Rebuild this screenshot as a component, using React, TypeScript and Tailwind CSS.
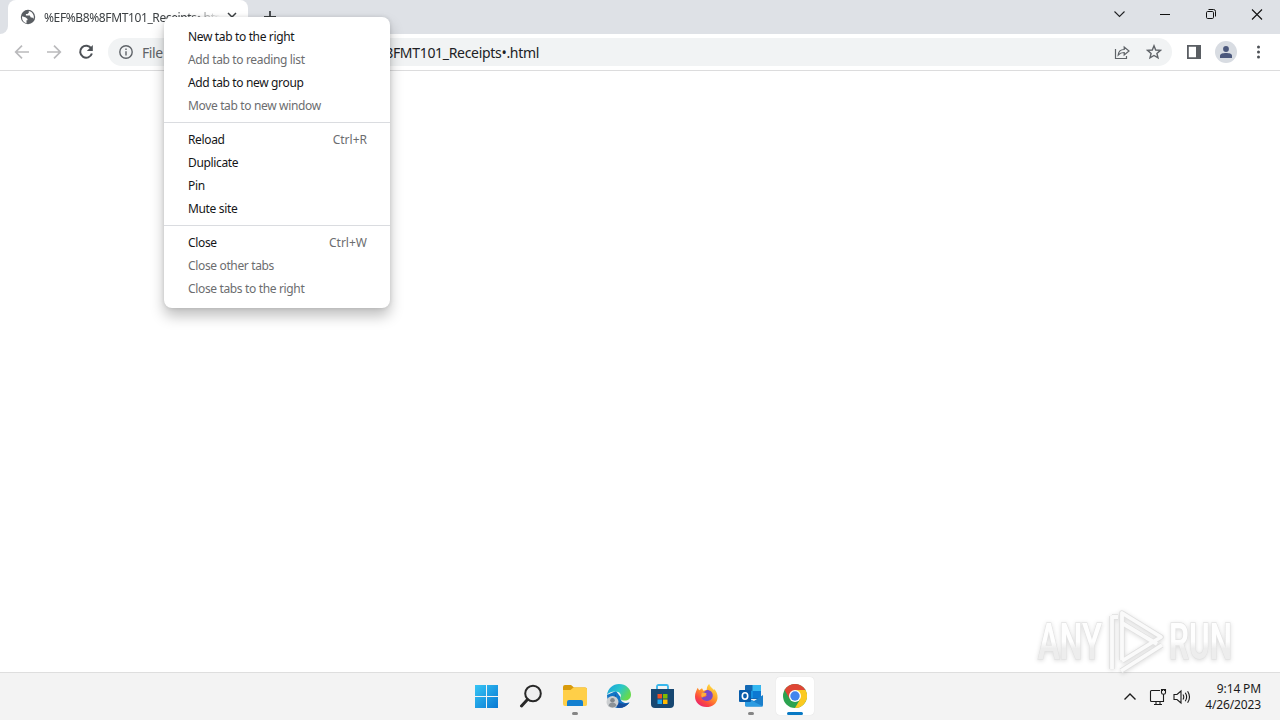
import React from "react";

type MenuItem = {
  label: string;
  shortcut?: string;
  disabled?: boolean;
};

const menuGroups: MenuItem[][] = [
  [
    { label: "New tab to the right" },
    { label: "Add tab to reading list", disabled: true },
    { label: "Add tab to new group" },
    { label: "Move tab to new window", disabled: true },
  ],
  [
    { label: "Reload", shortcut: "Ctrl+R" },
    { label: "Duplicate" },
    { label: "Pin" },
    { label: "Mute site" },
  ],
  [
    { label: "Close", shortcut: "Ctrl+W" },
    { label: "Close other tabs", disabled: true },
    { label: "Close tabs to the right", disabled: true },
  ],
];

const GlobeIcon = () => (
  <svg className="w-4 h-4 shrink-0" viewBox="0 0 16 16">
    <circle cx="8" cy="8" r="7.2" fill="#5a5e63" />
    <path d="M2.2 7.2 5.8 8.500 7.500 10v1.200H6.500v3C4 13.700 2 11.400 2 8.300ZM8.800 2.100v1.700L7.400 5H5.900v1.600h3.900l1 1.900h1.500l1.200 1.300c.4-.9.500-2.700-.1-3.900C12.600 3.800 11 2.500 8.800 2.100Z" fill="#fff" />
  </svg>
);

const TabStrip = () => (
  <div className="flex h-[34px] bg-[#dee1e6]">
    <div className="flex w-2 items-end bg-white">
      <div className="h-full w-2 rounded-br-lg bg-[#dee1e6]" />
    </div>
    <div className="flex h-[34px] w-[240px] items-center rounded-t-lg bg-white pl-3">
      <GlobeIcon />
      <span className="ml-2 w-[176px] overflow-hidden whitespace-nowrap pt-px text-[12px] leading-4 tracking-[-0.38px] text-[#3c4043] [mask-image:linear-gradient(to_right,black_82%,transparent)]">
        %EF%B8%8FMT101_Receipts•.html
      </span>
      <svg className="ml-1 h-4 w-4 shrink-0" viewBox="0 0 16 16" stroke="#3c4043" strokeWidth="1.5">
        <path d="m4 4 8 8M12 4l-8 8" />
      </svg>
    </div>
    <div className="flex w-2 bg-white">
      <div className="h-full w-2 rounded-bl-lg bg-[#dee1e6]" />
    </div>
    <svg className="ml-1.5 mt-[9px] h-4 w-4" viewBox="0 0 16 16" stroke="#3c4043" strokeWidth="1.8">
      <path d="M8 2v12M2 8h12" />
    </svg>
    <div className="ml-auto flex h-7 items-center">
      <svg className="mr-[5px] h-7 w-9" viewBox="0 0 36 28" fill="none" stroke="#202124" strokeWidth="1.1">
        <path d="m13.500 11.500 5 5 5-5" />
      </svg>
      <svg className="h-7 w-[46px]" viewBox="0 0 46 28" stroke="#111">
        <path d="M18 14.500h10" />
      </svg>
      <svg className="h-7 w-[46px]" viewBox="0 0 46 28" fill="none" stroke="#111">
        <rect x="18.500" y="11.500" width="7" height="7" rx="1.200" />
        <path d="M20.500 9.500h5q2 0 2 2v5" />
      </svg>
      <svg className="h-7 w-[46px]" viewBox="0 0 46 28" stroke="#111" strokeWidth="1.1">
        <path d="m18 9.500 10 10M28 9.500l-10 10" />
      </svg>
    </div>
  </div>
);

const Toolbar = () => (
  <div className="flex h-[37px] items-center border-b border-[#dcdcdd] bg-white">
    <div className="flex w-[108px] shrink-0 items-center gap-4 pl-3.5 text-[#bababc]">
      <svg className="h-4 w-4" viewBox="0 0 16 16" fill="none" stroke="currentColor" strokeWidth="1.700">
        <path d="M15 8H2M8 1.700 1.700 8 8 14.300" />
      </svg>
      <svg className="h-4 w-4" viewBox="0 0 16 16" fill="none" stroke="currentColor" strokeWidth="1.700">
        <path d="M1 8h13M8 1.700 14.300 8 8 14.300" />
      </svg>
      <svg className="h-4 w-4" viewBox="0 0 16 16" fill="none" stroke="#4d5156" strokeWidth="2">
        <path d="M13.300 4.600A6 6 0 1 0 13.900 9.500" />
        <path d="M14.800 1v6H8.800Z" fill="#4d5156" stroke="none" />
      </svg>
    </div>
    <div className="flex h-7 w-[1064px] items-center rounded-full bg-[#f1f3f4] pl-[11px] pr-2.5">
      <svg className="h-[14px] w-[14px]" viewBox="0 0 14 14" fill="none" stroke="#5f6368" strokeWidth="1.400">
        <circle cx="7" cy="7" r="6.200" />
        <path d="M7 6.200v4.200M7 3.400v1.500" />
      </svg>
      <span className="ml-[9px] text-[14px] tracking-[-0.45px] text-[#5f6368]">File</span>
      <span className="ml-auto whitespace-nowrap text-right text-[14px] tracking-[-0.31px] text-[#202124]">
        8FMT101_Receipts•.html
      </span>
      <div className="ml-[575px] flex items-center gap-4">
        <svg className="h-4 w-4" viewBox="0 0 16 16" fill="none" stroke="#5f6368" strokeWidth="1.200">
          <path d="M1.500 5v9.500h11V12" />
          <path d="M4.200 11c.3-3.600 2.300-5.400 6-5.500V3l4.800 4-4.800 4V8.500c-2.600 0-4.500.7-6 2.500Z" />
        </svg>
        <svg className="h-4 w-4" viewBox="0 0 16 16" fill="none" stroke="#5f6368" strokeWidth="1.400">
          <path d="m8 1.800 1.700 4.200 4.700.4-3.500 3 1.100 4.500L8 11.500l-4 2.400 1.100-4.500-3.500-3L6.300 6Z" />
        </svg>
      </div>
    </div>
    <svg className="ml-[15px] h-[14px] w-[14px]" viewBox="0 0 14 14" fill="none" stroke="#5a5e63" strokeWidth="1.800">
      <path d="M.9.900h12.200v12.200H.900Z" />
      <path d="M9 0h5v14H9Z" fill="#5a5e63" stroke="none" />
    </svg>
    <div className="ml-3.5 flex h-[22px] w-[22px] items-center justify-center rounded-full bg-[#d8dce2]">
      <svg className="h-3 w-3" viewBox="0 0 12 12" fill="#4b587c">
        <circle cx="6" cy="3" r="2.900" />
        <path d="M0 12V9.800C0 7.800 3 7.100 6 7.100s6 .7 6 2.700V12Z" />
      </svg>
    </div>
    <svg className="ml-[14px] h-4 w-4" viewBox="0 0 16 16" fill="#4d5156">
      <circle cx="7.500" cy="3" r="1.500" />
      <circle cx="7.500" cy="8" r="1.500" />
      <circle cx="7.500" cy="13" r="1.500" />
    </svg>
  </div>
);

const TabMenu = () => (
  <div className="absolute left-[164px] top-[17px] w-[226px] rounded-lg bg-white py-2 text-[12px] tracking-[-0.35px] shadow-[0_8px_14px_rgba(0,0,0,0.25),0_0_4px_rgba(0,0,0,0.12)]">
    {menuGroups.map((group, index) => (
      <div key={index} className={index > 0 ? "mt-[5px] border-t border-[#dadce0] pt-[5px]" : ""}>
        {group.map((item) => (
          <div key={item.label} className="flex h-[23px] items-center justify-between pl-6 pr-[23px] pt-px">
            <span className={item.disabled ? "text-[#6c6d6f]" : "text-[#151618]"}>{item.label}</span>
            {item.shortcut && <span className="tracking-normal text-[#6c6d6f]">{item.shortcut}</span>}
          </div>
        ))}
      </div>
    ))}
  </div>
);

const StartIcon = () => (
  <svg className="h-6 w-6" viewBox="0 0 24 24">
    <defs>
      <linearGradient id="start" x1="0" y1="0" x2="1" y2="1" gradientUnits="objectBoundingBox">
        <stop stopColor="#36c5f5" />
        <stop offset="1" stopColor="#0878d3" />
      </linearGradient>
    </defs>
    <path d="M0 1h11v11H0ZM12 1h11v11H12ZM0 13h11v11H0ZM12 13h11v11H12Z" fill="url(#start)" />
  </svg>
);

const SearchIcon = () => (
  <svg className="h-6 w-6" viewBox="0 0 24 24" fill="none" stroke="#282828">
    <circle cx="14" cy="9.500" r="7.800" fill="#eeeeef" strokeWidth="2" />
    <path d="m8.500 15.500-6 6.500" strokeWidth="3" strokeLinecap="round" />
  </svg>
);

const FolderIcon = () => (
  <svg className="h-6 w-6" viewBox="0 0 24 24">
    <path d="M0 3q0-2 2-2h6l3 2.500h11q2 0 2 2V11H0Z" fill="#d99b0b" />
    <path d="M0 6h7.500l3-2.500H22q2 0 2 2v15q0 1.500-2 1.500H2q-2 0-2-2Z" fill="#ffcf48" />
    <path d="M4 22v-4q0-2 2-2h12q2 0 2 2v4Z" fill="#1480d0" />
  </svg>
);

const EdgeIcon = () => (
  <svg className="h-[26px] w-[26px]" viewBox="0 0 26 26">
    <defs>
      <linearGradient id="edgeTop" x1="0" y1="0" x2="1" y2=".5">
        <stop stopColor="#189dde" />
        <stop offset=".55" stopColor="#2ac7c9" />
        <stop offset="1" stopColor="#66d94d" />
      </linearGradient>
    </defs>
    <path d="M1 12C1 19 6 25 13 25c4.500 0 8-2.200 10.500-5.500-5 1.500-9.500-.5-9-5.500L10 8Z" fill="#1275c5" />
    <path d="M1 12C2 5 7 1 13 1c7 0 12 5 12 10.500 0 4-3 6-6 6-4 0-5.500-1.500-4.500-3 1.500-3-1-6-5-6-4.500 0-7 1.500-8.500 3.500Z" fill="url(#edgeTop)" />
    <path d="M10 11c-2 6 3 11 11 9.500l2.500-1C21 23 17.500 25 13 25c-4 0-6-4-5-10 .3-2 1-3.200 2-4Z" fill="#154d9c" />
    <circle cx="6.500" cy="19" r="6" fill="#cccfd1" />
    <circle cx="6.500" cy="17.300" r="2.300" fill="#80868b" />
    <path d="M2.500 22.500c1-4 7-4 8 0-2 2.500-6 2.500-8 0Z" fill="#8c9297" />
  </svg>
);

const StoreIcon = () => (
  <svg className="h-6 w-6" viewBox="0 0 24 24">
    <path d="M6 6V2.500Q6 1 7.500 1h8Q17 1 17 2.500V6" fill="none" stroke="#38b7ec" strokeWidth="1.800" />
    <path d="M0 5h23v15q0 4-4 4H4q-4 0-4-4Z" fill="#174771" />
    <path d="M6.500 10H11v4.500H6.500Z" fill="#f25022" />
    <path d="M12 10h4.500v4.500H12Z" fill="#7fba00" />
    <path d="M6.500 15.500H11V20H6.500Z" fill="#20a6ed" />
    <path d="M12 15.500h4.500V20H12Z" fill="#ffb900" />
  </svg>
);

const FirefoxIcon = () => (
  <svg className="h-6 w-6" viewBox="0.7 0.5 25 25">
    <defs>
      <linearGradient id="fox" x1=".9" y1="0" x2=".2" y2="1">
        <stop stopColor="#fff04c" />
        <stop offset=".45" stopColor="#ff9b28" />
        <stop offset=".75" stopColor="#fc493f" />
        <stop offset="1" stopColor="#e51d79" />
      </linearGradient>
    </defs>
    <path d="M3.500 4.500 5 7l3-2 1.500 2.500L13 6.500c-.2-2.500.8-4.800 2.500-6 .3 2.500 3 3.500 4.500 6l1-.5c2 2.500 3.500 5 3.200 9-.5 6-5.700 9.500-11.700 9.500C6 24.500.7 20 .7 13.500c0-3.500 1.500-6 2.800-9Z" fill="url(#fox)" />
    <path d="M8 10c3-1 4-4 7-3 3.500 1 4.800 4 4 7-1 3.500-5.500 5-9 3.500-2-1-3-2.500-2.500-4 2 1.500 5 .5 5.500-1.500-2 0-4-1-5-2Z" fill="#7949ca" />
    <path d="M8 9.500c2-.5 3.500 0 5 1.200l-1.500 1.800c-1.800.5-3 1.500-3.500 2.500-1-1.500-1-4 0-5.500Z" fill="#ffb13b" />
  </svg>
);

const OutlookIcon = () => (
  <svg className="h-6 w-6" viewBox="0 0 24 24">
    <path d="M7 1h14q1 0 1 1v13H6V2q0-1 1-1Z" fill="#1368b4" />
    <path d="M13.500 1H21q1 0 1 1v5h-8.500Z" fill="#35b8f1" />
    <path d="M6 7h8v7H6Z" fill="#1490df" />
    <path d="M14 7h8v7h-8Z" fill="#0c78d2" />
    <path d="m24 11-9 6-9-4v8q0 1.500 1.500 1.500h15q1.500 0 1.500-1.500Z" fill="#1b7fcb" />
    <path d="m6 13 18 9.500H7.500Q6 22.500 6 21Z" fill="#2c9ce2" />
    <rect x="0" y="6" width="12" height="12" rx="1" fill="#075caa" />
    <ellipse cx="6" cy="12" rx="2.700" ry="3.200" fill="none" stroke="#fff" strokeWidth="1.600" />
  </svg>
);

const ChromeIcon = () => (
  <svg className="h-6 w-6" viewBox="0 0 24 24">
    <circle cx="12" cy="12" r="12" fill="#2ca350" />
    <path d="M1.600 6A12 12 0 0 1 22.400 6H12L6.800 15Z" fill="#df4635" />
    <path d="M22.400 6A12 12 0 0 1 12 24l5.200-9L12 6Z" fill="#fbc920" />
    <circle cx="12" cy="12" r="6" fill="#fff" />
    <circle cx="12" cy="12" r="4.700" fill="#4285ed" />
  </svg>
);

const taskbarApps = [
  { name: "start", Icon: StartIcon },
  { name: "search", Icon: SearchIcon },
  { name: "explorer", Icon: FolderIcon, open: true },
  { name: "edge", Icon: EdgeIcon },
  { name: "store", Icon: StoreIcon },
  { name: "firefox", Icon: FirefoxIcon },
  { name: "outlook", Icon: OutlookIcon, open: true },
  { name: "chrome", Icon: ChromeIcon, active: true },
];

const Taskbar = () => (
  <div className="flex h-12 border-t border-[#dedede] bg-[#f3f3f3]">
    <div className="ml-[468px] flex items-start gap-1.5 pt-1">
      {taskbarApps.map(({ name, Icon, open, active }) => (
        <div
          key={name}
          className={`flex h-[38px] w-[38px] flex-col items-center rounded ${active ? "bg-white shadow-[0_0_1px_rgba(0,0,0,0.15)]" : ""}`}
        >
          <div className="flex h-[35px] shrink-0 items-center justify-center pt-[3px]">
            <Icon />
          </div>
          {open && <div className="h-[3px] w-1.5 shrink-0 rounded-full bg-[#858585]" />}
          {active && <div className="h-[3px] w-4 shrink-0 rounded-full bg-[#0879c4]" />}
        </div>
      ))}
    </div>
    <div className="ml-auto flex items-center pr-[19px]">
      <svg className="h-4 w-4" viewBox="0 0 16 16" fill="none" stroke="#1b1b1b" strokeWidth="1.400">
        <path d="m2.500 10.500 5.500-5.500 5.500 5.500" />
      </svg>
      <svg className="ml-[11px] h-[18px] w-[18px]" viewBox="0 0 18 18" fill="none" stroke="#1b1b1b" strokeWidth="1.100">
        <path d="M11 2.500H2.500q-1 0-1 1v9q0 1 1 1h12M5 16.500h8M7 13.500v3M11 13.500v3" />
        <path d="M12.500 1.500h4v3.300q0 1.500-2 1.500t-2-1.500ZM14.500 6v8M13.500 1v2M15.500 1v2" />
      </svg>
      <svg className="ml-1.5 h-[18px] w-[18px]" viewBox="0 0 18 18" fill="none" stroke="#1b1b1b" strokeWidth="1.100">
        <path d="M1 6.500h3L8 3v12l-4-3.500H1ZM10 6.500q1.500 2.500 0 5M12.300 4.800q2.700 4.200 0 8.400M14.600 3.200q3.800 5.800 0 11.600" />
      </svg>
      <div className="ml-[14px] whitespace-nowrap text-right text-[12px] leading-4 tracking-[-0.13px] text-[#1b1b1b]">
        <div>9:14 PM</div>
        <div>4/26/2023</div>
      </div>
    </div>
  </div>
);

const playMark = "M82 16v53M82 17h6M92 60V13l39 24-39 24M92 23l35 21M91 71l41-26";

const Watermark = () => (
  <svg
    className="absolute left-[1030px] top-[600px] h-[80px] w-[210px] drop-shadow-[0_1px_2px_rgba(0,0,0,0.14)]"
    viewBox="0 0 210 80"
  >
    <defs>
      <linearGradient id="mark" x1="0" y1="0" x2="0" y2="1">
        <stop offset=".5" stopColor="#fefefe" />
        <stop offset=".62" stopColor="#ededed" />
      </linearGradient>
    </defs>
    <g
      fill="url(#mark)"
      stroke="#e2e2e2"
      strokeWidth="1.600"
      paintOrder="stroke"
      fontFamily="Roboto, sans-serif"
      fontSize="50"
      fontWeight="600"
    >
      <text x="8" y="58.500" textLength="64" lengthAdjust="spacingAndGlyphs">ANY</text>
      <text x="139" y="58.500" textLength="63" lengthAdjust="spacingAndGlyphs">RUN</text>
    </g>
    <g fill="none" strokeLinejoin="round">
      <path d={playMark} stroke="#e0e0e0" strokeWidth="5.500" />
      <path d={playMark} stroke="#fafafa" strokeWidth="3.800" />
    </g>
  </svg>
);

const App: React.FC = () => {
  return (
    <div className="relative flex h-[720px] w-[1280px] flex-col overflow-hidden bg-white font-['Noto_Sans',sans-serif]">
      <TabStrip />
      <Toolbar />
      <main className="flex-1 bg-white" />
      <Taskbar />
      <Watermark />
      <TabMenu />
    </div>
  );
};

export default App;
